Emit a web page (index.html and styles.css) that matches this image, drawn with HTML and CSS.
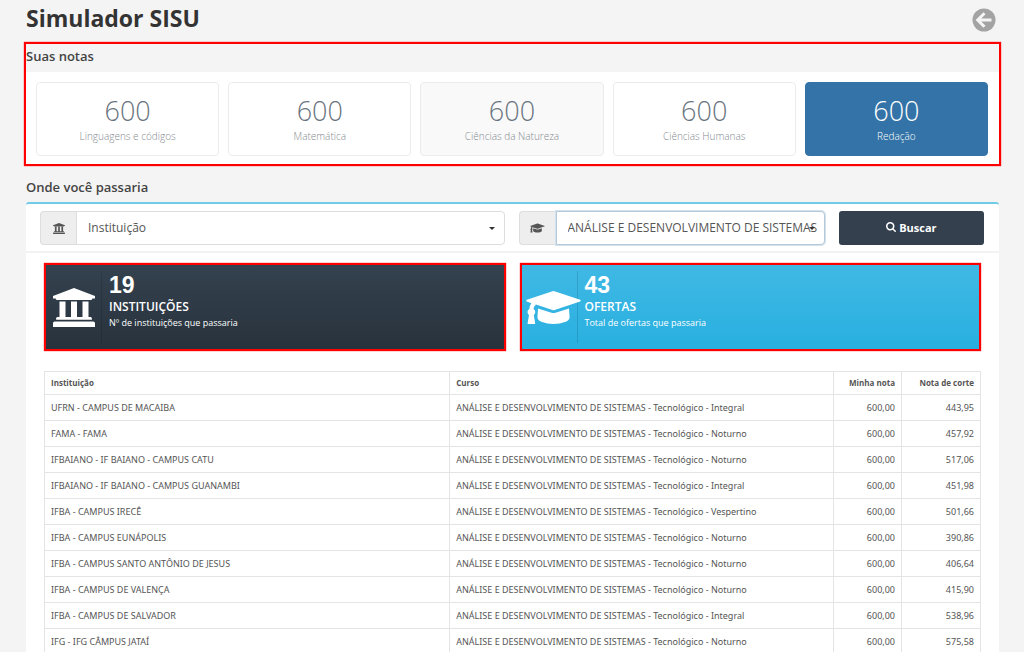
FILE: index.html
```
<!DOCTYPE html>
<html lang="pt-BR">
<head>
<meta charset="utf-8">
<meta name="viewport" content="width=device-width, initial-scale=1">
<title>Simulador SISU</title>
<link rel="stylesheet" href="styles.css">
</head>
<body>
<svg class="sprite" aria-hidden="true">
  <symbol id="bank" viewBox="0 0 42 39">
    <path d="M21 0 42 8v2.500h-2.600q0 1.500-1.800 1.500H4.400q-1.800 0-1.800-1.500H0V8zM6.500 13.500h6V29H18V13.500h6V29h5.500V13.500h6V29h2.100q1.300 0 1.300 1.500v1.200H3.100v-1.200Q3.100 29 4.400 29h2.100zM1.800 33.500h38.400q1.800 0 1.800 1.500v4H0v-4q0-1.500 1.800-1.500z"/>
  </symbol>
  <symbol id="cap" viewBox="0 0 55 33">
    <path d="M26.500.300q1-.400 2 0l25.600 8.500q1.200.700 0 1.600l-25.600 8.700q-1 .4-2 0L10 13.500q-2.300 1.600-2.500 4.600 1.800 1 1.800 3 0 1.800-1.500 2.900l1.400 8.400q0 .600-.700.600H2.300q-.800 0-.700-.700L3 24q-1.500-1-1.500-2.900t1.800-3q.2-3.600 2-5.900L.8 10.400q-1.200-.8 0-1.600zM12 17.500l13.500 4.200q2 .7 4 0l13.500-4.200.6 8.700q0 3-4.700 4.900T27.500 33t-11.400-1.900-4.700-4.900z"/>
  </symbol>
  <symbol id="search" viewBox="0 0 1664 1664">
    <path d="M1152 704q0-185-131.500-316.500T704 256 387.500 387.500 256 704t131.500 316.500T704 1152t316.500-131.500T1152 704zm512 832q0 52-38 90t-90 38q-54 0-90-38l-343-342q-179 124-399 124-143 0-273.500-55.500t-225-150-150-225T0 704t55.500-273.500 150-225 225-150T704 0t273.500 55.500 225 150 150 225T1408 704q0 220-124 399l343 343q37 37 37 90z"/>
  </symbol>
  <symbol id="caret" viewBox="0 0 6 3"><path d="M0 0h6L3 3z"/></symbol>
</svg>

<main class="page">
  <header class="page-header">
    <h1>Simulador SISU</h1>
    <a class="back" href="#" aria-label="Voltar">
      <svg viewBox="0 0 24 24"><circle cx="12" cy="12" r="11.500" fill="#a3a3a3"/><path d="M12.500 5.200 5.700 12l6.800 6.800M6.500 12h13" fill="none" stroke="#f5f5f5" stroke-width="3"/></svg>
    </a>
  </header>

  <section class="scores marked">
    <h2>Suas notas</h2>
    <div class="score-list">
      <div class="score"><strong>600</strong><span>Linguagens e códigos</span></div>
      <div class="score"><strong>600</strong><span>Matemática</span></div>
      <div class="score hovered"><strong>600</strong><span>Ciências da Natureza</span></div>
      <div class="score"><strong>600</strong><span>Ciências Humanas</span></div>
      <div class="score active"><strong>600</strong><span>Redação</span></div>
    </div>
  </section>

  <section class="results">
    <h2>Onde você passaria</h2>
    <div class="panel">
      <form class="filters">
        <div class="field">
          <label for="inst" aria-label="Instituição"><svg class="i-bank"><use href="#bank"/></svg></label>
          <div class="select"><select id="inst"><option>Instituição</option></select><svg class="caret"><use href="#caret"/></svg></div>
        </div>
        <div class="field focused">
          <label for="curso" aria-label="Curso"><svg class="i-cap"><use href="#cap"/></svg></label>
          <div class="select"><select id="curso"><option>ANÁLISE E DESENVOLVIMENTO DE SISTEMAS</option></select><svg class="caret"><use href="#caret"/></svg></div>
        </div>
        <button type="button"><svg><use href="#search"/></svg>Buscar</button>
      </form>

      <div class="content">
        <div class="stats">
          <div class="stat dark marked">
            <div class="stat-icon"><svg class="big-bank"><use href="#bank"/></svg></div>
            <div class="stat-text"><strong>19</strong><b>INSTITUIÇÕES</b><span>Nº de instituições que passaria</span></div>
          </div>
          <div class="stat blue marked">
            <div class="stat-icon"><svg class="big-cap"><use href="#cap"/></svg></div>
            <div class="stat-text"><strong>43</strong><b>OFERTAS</b><span>Total de ofertas que passaria</span></div>
          </div>
        </div>

        <table>
          <colgroup><col><col class="c-curso"><col class="c-nota"><col class="c-corte"></colgroup>
          <thead><tr><th>Instituição</th><th>Curso</th><th class="num">Minha nota</th><th class="num">Nota de corte</th></tr></thead>
          <tbody>
            <tr><td>UFRN - CAMPUS DE MACAIBA</td><td>ANÁLISE E DESENVOLVIMENTO DE SISTEMAS - Tecnológico - Integral</td><td class="num">600,00</td><td class="num">443,95</td></tr>
            <tr><td>FAMA - FAMA</td><td>ANÁLISE E DESENVOLVIMENTO DE SISTEMAS - Tecnológico - Noturno</td><td class="num">600,00</td><td class="num">457,92</td></tr>
            <tr><td>IFBAIANO - IF BAIANO - CAMPUS CATU</td><td>ANÁLISE E DESENVOLVIMENTO DE SISTEMAS - Tecnológico - Noturno</td><td class="num">600,00</td><td class="num">517,06</td></tr>
            <tr><td>IFBAIANO - IF BAIANO - CAMPUS GUANAMBI</td><td>ANÁLISE E DESENVOLVIMENTO DE SISTEMAS - Tecnológico - Integral</td><td class="num">600,00</td><td class="num">451,98</td></tr>
            <tr><td>IFBA - CAMPUS IRECÊ</td><td>ANÁLISE E DESENVOLVIMENTO DE SISTEMAS - Tecnológico - Vespertino</td><td class="num">600,00</td><td class="num">501,66</td></tr>
            <tr><td>IFBA - CAMPUS EUNÁPOLIS</td><td>ANÁLISE E DESENVOLVIMENTO DE SISTEMAS - Tecnológico - Noturno</td><td class="num">600,00</td><td class="num">390,86</td></tr>
            <tr><td>IFBA - CAMPUS SANTO ANTÔNIO DE JESUS</td><td>ANÁLISE E DESENVOLVIMENTO DE SISTEMAS - Tecnológico - Noturno</td><td class="num">600,00</td><td class="num">406,64</td></tr>
            <tr><td>IFBA - CAMPUS DE VALENÇA</td><td>ANÁLISE E DESENVOLVIMENTO DE SISTEMAS - Tecnológico - Noturno</td><td class="num">600,00</td><td class="num">415,90</td></tr>
            <tr><td>IFBA - CAMPUS DE SALVADOR</td><td>ANÁLISE E DESENVOLVIMENTO DE SISTEMAS - Tecnológico - Integral</td><td class="num">600,00</td><td class="num">538,96</td></tr>
            <tr><td>IFG - IFG CÂMPUS JATAÍ</td><td>ANÁLISE E DESENVOLVIMENTO DE SISTEMAS - Tecnológico - Noturno</td><td class="num">600,00</td><td class="num">575,58</td></tr>
          </tbody>
        </table>
      </div>
    </div>
  </section>
</main>
</body>
</html>
```

FILE: styles.css
```
* { box-sizing: border-box; }

html { overflow: hidden; }

body {
  margin: 0;
  background: #f4f4f4;
  color: #555;
  font-family: "Open Sans", "Noto Sans", sans-serif;
  font-size: 10px;
}

h1, h2 { margin: 0; }
svg { display: block; }

.sprite { position: absolute; width: 0; height: 0; }

.page { padding: 0 23px 0 24px; }

.marked {
  border: 2px solid #f00;
  box-shadow: 0 0 1px #f00;
}

.page-header {
  display: flex;
  justify-content: space-between;
  align-items: flex-start;
  height: 42px;
  padding: 2px 5px 0 2px;
}

.page-header h1 {
  color: #333;
  font-size: 23px;
  font-weight: 700;
  line-height: 32px;
}

.back { margin-top: 6px; }
.back svg { width: 24px; height: 24px; }

h2 {
  color: #444;
  font-size: 13px;
  font-weight: 600;
  line-height: 20px;
}

.scores h2 { padding: 2px 0 6px; }

.score-list {
  display: grid;
  grid-template-columns: repeat(5, 1fr);
  gap: 9px;
  padding: 10px 11px 8px 10px;
  background: #fff;
}

.score {
  display: flex;
  flex-direction: column;
  align-items: center;
  padding: 12px 0 10px;
  border: 1px solid #ececec;
  border-radius: 4px;
  background: #fff;
  color: #858b91;
}

.score strong {
  color: #697480;
  font-size: 27px;
  font-weight: 300;
  line-height: 32px;
}

.score span {
  font-size: 10px;
  font-weight: 300;
  line-height: 18px;
}

.score.hovered { background: #f9f9f9; }

.score.active {
  border-color: #3373a7;
  background: #3373a7;
  color: #fff;
}

.score.active strong { color: #fff; }

.results { padding: 11px 2px 0; }
.results h2 { padding-bottom: 5px; }

.panel {
  border-top: 2px solid #6fcbe6;
  border-radius: 3px 3px 0 0;
  background: #fff;
}

.filters {
  display: grid;
  grid-template-columns: 464fr 306fr 145fr;
  gap: 14px;
  padding: 7px 15px 6px 14px;
  border-bottom: 2px solid #f3f3f3;
}

.field { display: flex; min-width: 0; }

.field label {
  display: flex;
  flex: none;
  align-items: center;
  justify-content: center;
  width: 36px;
  border: 1px solid #ddd;
  border-right: 0;
  border-radius: 4px 0 0 4px;
  background: #eee;
}

.field label svg { fill: #555; }
.i-bank { width: 12px; height: 11px; }
.i-cap { width: 15px; height: 10px; }

.select { position: relative; flex: 1; min-width: 0; }

.select select {
  appearance: none;
  width: 100%;
  height: 34px;
  padding: 0 4px 2px 11px;
  border: 1px solid #ddd;
  border-radius: 0 4px 4px 0;
  background: #fff;
  color: #555;
  font-family: inherit;
  font-size: 12px;
}

.focused label { width: 37px; }

.focused .select select {
  border-color: #b4c9da;
  box-shadow: 0 0 0 1px #d5e2ec;
}

.caret {
  position: absolute;
  top: 16px;
  right: 10px;
  width: 6px;
  height: 3px;
  fill: #333;
  pointer-events: none;
}

.filters button {
  display: flex;
  align-items: center;
  justify-content: center;
  gap: 3px;
  padding: 0 0 2px;
  border: 0;
  border-radius: 3px;
  background: #34404d;
  color: #fff;
  font-family: inherit;
  font-size: 11px;
  font-weight: 700;
}

.filters button svg { width: 10px; height: 10px; fill: #fff; }

.content { padding: 10px 18px 20px; }

.stats {
  display: grid;
  grid-template-columns: 1fr 1fr;
  gap: 14px;
  margin-bottom: 20px;
}

.stat { display: flex; padding: 6px 0; color: #fff; }
.stat.dark { background: linear-gradient(#34424f, #28323c); }
.stat.blue { background: linear-gradient(#40b8e4, #28b0e0); }

.stat-icon {
  display: flex;
  align-items: center;
  justify-content: center;
  width: 56px;
  border-right: 1px solid rgba(0, 0, 0, 0.12);
}

.blue .stat-icon { justify-content: flex-start; padding-left: 4px; }

.stat-icon svg { flex: none; fill: #fff; }
.big-bank { width: 42px; height: 39px; }
.big-cap { width: 55px; height: 33px; }

.stat-text {
  display: flex;
  flex-direction: column;
  padding: 0 0 12px 7px;
}

.stat-text strong {
  font-family: "Liberation Sans", Arial, sans-serif;
  font-size: 23px;
  line-height: 28px;
}

.stat-text b { font-size: 12px; font-weight: 600; line-height: 16px; }
.stat-text span { font-size: 9px; line-height: 16px; }

table {
  width: 100%;
  border-collapse: collapse;
  table-layout: fixed;
  background: #fff;
}

.c-curso { width: 41%; }
.c-nota { width: 68px; }
.c-corte { width: 79px; }

th, td {
  padding: 5px 6px;
  border: 1px solid #e4e4e4;
  font-family: "Noto Sans", "Open Sans", sans-serif;
  font-size: 9px;
  line-height: 15px;
  text-align: left;
  white-space: nowrap;
}

th {
  padding: 4px 6px;
  font-family: "Open Sans", "Noto Sans", sans-serif;
  font-size: 8px;
  font-weight: 700;
  line-height: 14px;
}

.num { text-align: right; }
```
